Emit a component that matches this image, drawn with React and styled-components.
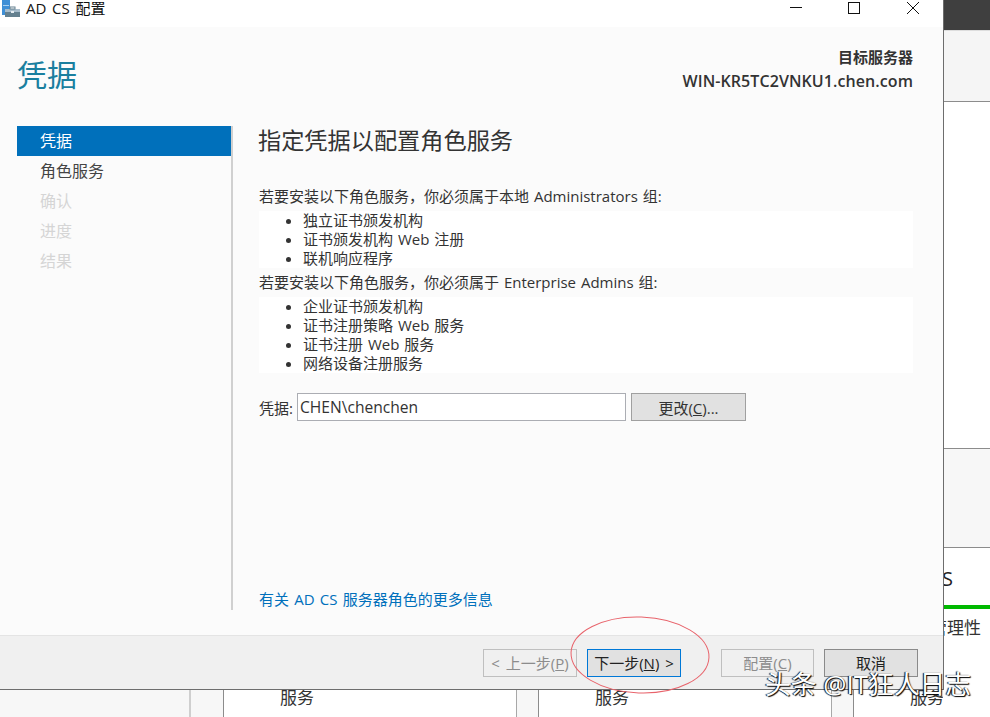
import React from 'react';
import styled, { createGlobalStyle } from 'styled-components';

const FONT = '"Open Sans", "Noto Sans CJK SC", sans-serif';

const GlobalStyle = createGlobalStyle`
    html, body {
        margin: 0;
        padding: 0;
        background: #fff;
    }
`

const Page = styled.div`
    position: relative;
    width: 990px;
    height: 717px;
    overflow: hidden;
    font-family: ${FONT};
    color: #333;
    display: flex;
    flex-direction: column;
    justify-content: flex-end;
`

// what shows behind the dialog
const SideColumn = styled.div`
    position: absolute;
    top: 0;
    right: 0;
    bottom: 0;
    width: 47px;
    display: flex;
    flex-direction: column;
    background: #fff;
`

const SideTop = styled.div`
    height: 30px;
    background: #3f3f3f;
`

const SideHead = styled.div`
    height: 70px;
    background: #f5f5f5;
    border-top: 1px solid #ddd;
    border-bottom: 1px solid #8c8c8c;
`

const SideBlank = styled.div`
    height: 346px;
`

const SideGrey = styled.div`
    height: 98px;
    background: #f7f7f7;
    border-top: 1px solid #8c8c8c;
    border-bottom: 1px solid #8c8c8c;
`

const SideTitle = styled.div`
    height: 57px;
    display: flex;
    justify-content: flex-end;
    align-items: center;
    padding-right: 37px;
    padding-top: 4px;
    box-sizing: border-box;
    font-size: 20px;
    color: #222;
    white-space: nowrap;
`

const GreenBar = styled.div`
    height: 4px;
    background: #00b900;
`

const SideText = styled.div`
    display: flex;
    justify-content: flex-end;
    padding: 8px 9px 0 0;
    font-size: 17px;
    line-height: 22px;
    color: #333;
    white-space: nowrap;
`

const BottomStrip = styled.div`
    height: 28px;
    display: flex;
    background: #fff;
`

const StripLead = styled.div`
    width: 223px;
    flex: none;
    display: flex;
    background: #f7f7f7;
    border-right: 1px solid #8c8c8c;
`

const StripEdge = styled.div`
    width: 189px;
    border-right: 2px solid #cfcfcf;
`

const Tile = styled.div`
    width: 292px;
    flex: none;
    padding-left: 56px;
    box-sizing: border-box;
    font-size: 17px;
    line-height: 18px;
    color: #333;
    background: #fff;
`

const Gutter = styled.div`
    width: 21px;
    flex: none;
    background: #f7f7f7;
    border-left: 1px solid #a8a8a8;
    border-right: 1px solid #8c8c8c;
`

// the dialog
const Dialog = styled.div`
    position: absolute;
    top: 0;
    left: 0;
    width: 943px;
    height: 689px;
    display: flex;
    flex-direction: column;
    background: #fbfbfb;
    border-right: 1px solid #6d6d6d;
    border-bottom: 1px solid #6d6d6d;
`

const TitleBar = styled.div`
    height: 27px;
    flex: none;
    display: flex;
    align-items: flex-start;
    background: #fff;
`

const TitleText = styled.span`
    margin-left: 4px;
    font-size: 15px;
    line-height: 17px;
    word-spacing: 1.5px;
    letter-spacing: 0.1px;
    color: #111;
`

const WindowButtons = styled.div`
    margin-left: auto;
    display: flex;
    height: 16px;
    margin-right: 24px;
    gap: 46px;
`

const Header = styled.div`
    height: 99px;
    flex: none;
    display: flex;
    justify-content: space-between;
    padding: 0 30px 0 17px;
    box-sizing: border-box;
`

const PageTitle = styled.h1`
    margin: 28px 0 0;
    font-size: 30px;
    line-height: 40px;
    font-weight: 400;
    color: #1a7f9f;
`

const Server = styled.div`
    margin-top: 18px;
    text-align: right;
    font-weight: 600;
    color: #333;
`

const ServerLabel = styled.div`
    font-size: 15px;
    line-height: 24px;
`

const ServerName = styled.div`
    font-size: 16px;
    line-height: 24px;
    letter-spacing: 0.08px;
`

const Main = styled.div`
    height: 484px;
    flex: none;
    display: flex;
    margin-left: 17px;
`

const Nav = styled.nav`
    width: 216px;
    flex: none;
    box-sizing: border-box;
    border-right: 2px solid #d0d0d0;
`

const NavItem = styled.div`
    width: 214px;
    height: 30px;
    padding-left: 23px;
    box-sizing: border-box;
    font-size: 16px;
    line-height: 30px;
    background: ${p => (p.$active ? '#0070bb' : 'transparent')};
    color: ${p => (p.$active ? '#fff' : p.$disabled ? '#d5d5d5' : '#444')};
`

const Content = styled.section`
    flex: 1;
    display: flex;
    flex-direction: column;
    padding: 0 30px 0 26px;
    font-size: 15px;
    word-spacing: 1px;
`

const Heading = styled.h2`
    margin: 0 0 31px -1px;
    font-size: 23.2px;
    line-height: 29px;
    font-weight: 400;
    color: #333;
`

const Para = styled.p`
    margin: 1px 0 5px;
    line-height: 19px;
`

const RoleList = styled.ul`
    margin: 0 0 4px;
    padding: 0 0 0 44px;
    background: #fff;
    line-height: 19px;
`

const Role = styled.li`
    line-height: 19px;
`

const CredRow = styled.div`
    margin-top: 16px;
    display: flex;
    align-items: center;
`

const CredLabel = styled.label`
    width: 38px;
    flex: none;
`

const CredInput = styled.div`
    width: 329px;
    height: 28px;
    box-sizing: border-box;
    border: 1px solid #abadb3;
    background: #fff;
    padding-left: 2px;
    font-size: 15.6px;
    line-height: 26px;
    color: #333;
`

const ChangeButton = styled.button`
    margin-left: 5px;
    width: 115px;
    height: 28px;
    font: inherit;
    font-size: 15px;
    color: #333;
    background: #e1e1e1;
    border: 1px solid #a0a0a0;
    padding: 0;
`

const MoreLink = styled.a`
    margin-top: auto;
    line-height: 19px;
    color: #0070bb;
    padding-bottom: 1px;
    word-spacing: 1.3px;
`

const Footer = styled.div`
    margin-top: auto;
    height: 54px;
    flex: none;
    display: flex;
    align-items: center;
    padding: 0 25px 0 483px;
    box-sizing: border-box;
    background: #f0f0f0;
    border-top: 1px solid #e4e4e4;
`

const FooterButton = styled.button`
    width: ${p => p.$w || 94}px;
    height: 28px;
    margin-left: ${p => p.$gap || 0}px;
    padding: 0;
    flex: none;
    font-family: ${FONT};
    font-size: 15px;
    word-spacing: 2px;
    color: ${p => (p.disabled ? '#8c8c8c' : '#222')};
    background: ${p => (p.disabled ? '#f0f0f0' : '#e1e1e1')};
    border: 1px solid ${p => (p.disabled ? '#bfbfbf' : p.$focus ? '#0078d7' : '#8a8a8a')};
`

const Ring = styled.svg`
    position: absolute;
    left: 566px;
    top: 612px;
`

const Watermark = styled.div`
    position: absolute;
    left: 765px;
    top: 668px;
    font-size: 25.8px;
    line-height: 32px;
    color: #fff;
    white-space: nowrap;
    text-shadow: 1px 1px 1px #000, -1px 0 1px #000;
`

function AppIcon() {
    return (
        <svg width="20" height="18" viewBox="0 0 20 18" style={{ flex: 'none', marginLeft: 2 }}>
            <rect x="0" y="0" width="8" height="15" fill="#3f8fd6" />
            <rect x="1" y="5" width="6" height="1" fill="#a9d0ef" />
            <rect x="3" y="9" width="15" height="8" fill="#64808f" />
            <rect x="3" y="9" width="15" height="3" fill="#a7bccb" />
            <rect x="8" y="7" width="5" height="2" fill="none" stroke="#64808f" strokeWidth="1" />
            <rect x="9" y="11" width="3" height="2" fill="#e6edf2" />
        </svg>
    )
}

function WindowIcons() {
    return (
        <WindowButtons>
            <svg width="12" height="16" viewBox="0 0 12 16">
                <path d="M0 7.5H12" stroke="#111" strokeWidth="1" />
            </svg>
            <svg width="13" height="16" viewBox="0 0 13 16">
                <rect x="0.5" y="2.5" width="11" height="11" fill="none" stroke="#111" />
            </svg>
            <svg width="12" height="16" viewBox="0 0 12 16">
                <path d="M0 2L12 14M12 2L0 14" stroke="#111" strokeWidth="1" fill="none" />
            </svg>
        </WindowButtons>
    )
}

const steps = [
    { label: '凭据', active: true },
    { label: '角色服务' },
    { label: '确认', disabled: true },
    { label: '进度', disabled: true },
    { label: '结果', disabled: true },
]

const adminRoles = ['独立证书颁发机构', '证书颁发机构 Web 注册', '联机响应程序']
const enterpriseRoles = ['企业证书颁发机构', '证书注册策略 Web 服务', '证书注册 Web 服务', '网络设备注册服务']

export default function App() {
    return (
        <Page>
            <GlobalStyle />
            <SideColumn>
                <SideTop />
                <SideHead />
                <SideBlank />
                <SideGrey />
                <SideTitle>AD CS</SideTitle>
                <GreenBar />
                <SideText>可管理性</SideText>
            </SideColumn>
            <BottomStrip>
                <StripLead><StripEdge /></StripLead>
                <Tile>服务</Tile>
                <Gutter />
                <Tile>服务</Tile>
                <Gutter />
                <Tile>服务</Tile>
            </BottomStrip>
            <Dialog>
                <TitleBar>
                    <AppIcon />
                    <TitleText>AD CS 配置</TitleText>
                    <WindowIcons />
                </TitleBar>
                <Header>
                    <PageTitle>凭据</PageTitle>
                    <Server>
                        <ServerLabel>目标服务器</ServerLabel>
                        <ServerName>WIN-KR5TC2VNKU1.chen.com</ServerName>
                    </Server>
                </Header>
                <Main>
                    <Nav>
                        {steps.map(s => (
                            <NavItem key={s.label} $active={s.active} $disabled={s.disabled}>{s.label}</NavItem>
                        ))}
                    </Nav>
                    <Content>
                        <Heading>指定凭据以配置角色服务</Heading>
                        <Para>若要安装以下角色服务，你必须属于本地 Administrators 组:</Para>
                        <RoleList>
                            {adminRoles.map(r => <Role key={r}>{r}</Role>)}
                        </RoleList>
                        <Para>若要安装以下角色服务，你必须属于 Enterprise Admins 组:</Para>
                        <RoleList>
                            {enterpriseRoles.map(r => <Role key={r}>{r}</Role>)}
                        </RoleList>
                        <CredRow>
                            <CredLabel>凭据:</CredLabel>
                            <CredInput>CHEN\chenchen</CredInput>
                            <ChangeButton>更改(<u>C</u>)...</ChangeButton>
                        </CredRow>
                        <MoreLink>有关 AD CS 服务器角色的更多信息</MoreLink>
                    </Content>
                </Main>
                <Footer>
                    <FooterButton disabled>&lt; 上一步(<u>P</u>)</FooterButton>
                    <FooterButton $gap={10} $focus>下一步(<u>N</u>) &gt;</FooterButton>
                    <FooterButton disabled $gap={40} $w={93}>配置(<u>C</u>)</FooterButton>
                    <FooterButton $gap={10}>取消</FooterButton>
                </Footer>
            </Dialog>
            <Ring width="148" height="88" viewBox="0 0 148 88">
                <ellipse cx="74" cy="43" rx="69" ry="38" fill="none" stroke="#e8636b" strokeWidth="1" transform="rotate(2 74 43)" />
            </Ring>
            <Watermark>头条 @IT狂人日志</Watermark>
        </Page>
    )
}
